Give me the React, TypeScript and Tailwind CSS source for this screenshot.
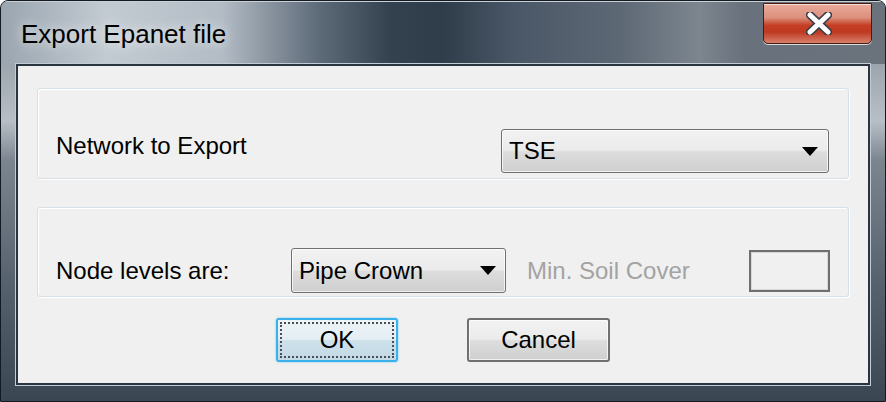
const font = "font-['Liberation_Sans',Arial,sans-serif]";

function Arrow({ w, h }: { w: number; h: number }) {
  return (
    <svg width={w} height={h} viewBox={`0 0 ${w} ${h}`}>
      <polygon points={`0,0 ${w},0 ${w / 2},${h}`} fill="#000" />
    </svg>
  );
}

function Combo({ text, className }: { text: string; className: string }) {
  return (
    <div
      className={`flex items-center justify-between rounded-[3px] border border-[#707070] bg-[linear-gradient(to_bottom,#f2f2f2_0%,#ebebeb_48%,#dddddd_52%,#cfcfcf_100%)] shadow-[inset_0_0_0_1px_rgba(255,255,255,0.7)] ${className}`}
    >
      <span className="text-[24px] leading-none text-black">{text}</span>
      <Arrow w={16} h={9} />
    </div>
  );
}

function GroupBox({ className, children }: { className: string; children: React.ReactNode }) {
  return (
    <div
      className={`flex items-center rounded-[3px] border border-[#d5dfe5] shadow-[inset_1px_1px_0_#ffffff,1px_1px_0_#ffffff] ${className}`}
    >
      {children}
    </div>
  );
}

export default function App() {
  return (
    <div className={`w-[886px] h-[402px] bg-white ${font}`}>
      <div className="flex h-full w-full flex-col overflow-hidden rounded-t-[8px] border border-[#141a21] bg-[linear-gradient(to_bottom,#7e8892_0%,#b8bfc6_30%,#7b8590_40%,#56626e_70%,#3a4651_100%)]">
        {/* title bar */}
        <div className="flex h-[63px] shrink-0 items-start justify-between border-t border-[#c9d0d6] pl-[20px] pr-[13px] bg-[linear-gradient(to_right,#9aa5b0_0%,#c3cbd2_12%,#b3bcc5_25%,#5d6a78_36%,#34414f_44%,#2f3c4a_50%,#4a5766_58%,#5d6875_70%,#7d868f_79%,#69727c_84%,#6a737c_100%)]">
          <span className="self-center pt-[1px] text-[26px] leading-none text-black [text-shadow:0_0_12px_rgba(255,255,255,0.9)]">
            Export Epanet file
          </span>
          <div className="mt-[1px] flex h-[41px] w-[109px] items-center justify-center rounded-b-[5px] border border-[#4c1b0f] bg-[linear-gradient(to_bottom,#e9ab9c_0%,#dc8f7c_35%,#c43d24_55%,#bf3a22_72%,#d6806c_100%)] shadow-[0_1px_0_#d8dde2,inset_0_1px_0_rgba(255,255,255,0.6)]">
            <svg width="26" height="23" viewBox="0 0 26 23" className="ml-[3px]">
              <path d="M4 3 L22 20 M22 3 L4 20" stroke="#3a3f46" strokeWidth="8" strokeLinecap="round" />
              <path d="M4 3 L22 20 M22 3 L4 20" stroke="#ffffff" strokeWidth="5" strokeLinecap="round" />
            </svg>
          </div>
        </div>

        {/* body */}
        <div className="flex flex-1 flex-col px-[15px] pb-[16px]">
          <div className="flex flex-1 flex-col border-2 border-[#2b353f] bg-[#f0f0f0] px-[19px] pt-[22px] shadow-[0_0_0_1px_#c3ccd4]">
            <GroupBox className="h-[91px] pl-[18px] pr-[19px] pt-[40px] pb-[5px]">
              <span className="mb-[10px] text-[24px] leading-none text-black">Network to Export</span>
              <div className="flex-1" />
              <Combo text="TSE" className="h-[44px] w-[328px] pl-[7px] pr-[10px]" />
            </GroupBox>

            <GroupBox className="mt-[28px] h-[90px] pl-[18px] pr-[18px] pt-[40px] pb-[3px]">
              <span className="w-[235px] text-[24px] leading-none text-black">Node levels are:</span>
              <Combo text="Pipe Crown" className="h-[45px] w-[215px] pl-[7px] pr-[9px]" />
              <span className="ml-[21px] flex-1 text-[24px] leading-none text-[#a3a3a3]">Min. Soil Cover</span>
              <div className="h-[42px] w-[81px] border-2 border-[#6f6f6f] bg-[#f0f0f0] shadow-[inset_0_0_0_1px_#d8d8d8]" />
            </GroupBox>

            <div className="mt-[21px] flex justify-center gap-[69px]">
              <div className="flex h-[44px] w-[122px] items-center justify-center rounded-[3px] border-2 border-[#3bb1ec] bg-[linear-gradient(to_bottom,#eef4f7_0%,#e3eef4_48%,#cde1eb_52%,#c3d9e5_100%)] p-[2px] shadow-[0_0_2px_#5fc6f5]">
                <div className="flex h-full w-full items-center justify-center border-2 border-dotted border-[#4a4f55]">
                  <span className="text-[24px] leading-none text-black">OK</span>
                </div>
              </div>
              <div className="flex h-[44px] w-[143px] items-center justify-center rounded-[3px] border-2 border-[#707070] bg-[linear-gradient(to_bottom,#f2f2f2_0%,#ebebeb_48%,#dddddd_52%,#cfcfcf_100%)] shadow-[inset_0_0_0_1px_rgba(255,255,255,0.7)]">
                <span className="text-[24px] leading-none text-black">Cancel</span>
              </div>
            </div>
          </div>
        </div>
      </div>
    </div>
  );
}
